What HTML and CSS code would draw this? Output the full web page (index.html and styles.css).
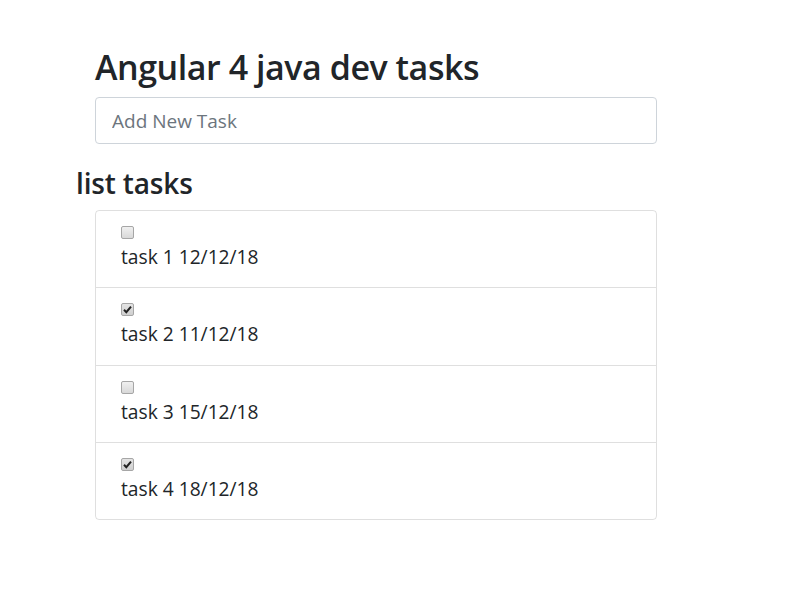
FILE: index.html
```html
<!DOCTYPE html>
<html>
<head>
<meta charset="utf-8">
<link rel="stylesheet" href="styles.css">
</head>
<body>
<div class="app">
  <h1 class="title">Angular 4 java dev tasks</h1>
  <input class="task-input" type="text" placeholder="Add New Task">
  <h2 class="subtitle">list tasks</h2>
  <ul class="task-list">
    <li class="task-item">
      <span class="check"></span>
      <div class="task-text">task 1 12/12/18</div>
    </li>
    <li class="task-item tall">
      <span class="check checked"><svg viewBox="0 0 13 13" width="13" height="13"><path d="M3 6.8 L5.3 9.2 L10 3.6" fill="none" stroke="#222" stroke-width="2"/></svg></span>
      <div class="task-text">task 2 11/12/18</div>
    </li>
    <li class="task-item">
      <span class="check"></span>
      <div class="task-text">task 3 15/12/18</div>
    </li>
    <li class="task-item">
      <span class="check checked"><svg viewBox="0 0 13 13" width="13" height="13"><path d="M3 6.8 L5.3 9.2 L10 3.6" fill="none" stroke="#222" stroke-width="2"/></svg></span>
      <div class="task-text">task 4 18/12/18</div>
    </li>
  </ul>
</div>
</body>
</html>
```
FILE: styles.css
```css
* { box-sizing: border-box; }
html, body { margin: 0; padding: 0; background: #fff; }
body {
  font-family: "Open Sans", "Noto Sans", sans-serif;
  color: #212529;
}
.app {
  padding-left: 95px;
  width: 657px;
}
.title {
  margin: 43px 0 6px 0;
  font-size: 34px;
  line-height: 48px;
  font-weight: 600;
  letter-spacing: -0.45px;
}
.task-input {
  display: block;
  width: 562px;
  height: 47px;
  margin: 0;
  padding: 0 16px;
  border: 1px solid #ced4da;
  border-radius: 4px;
  font-family: inherit;
  font-size: 19px;
  color: #495057;
  outline: none;
}
.task-input::placeholder { color: #6c757d; opacity: 1; }
.subtitle {
  margin: 20px 0 8px -19px;
  font-size: 28px;
  line-height: 38px;
  font-weight: 600;
  letter-spacing: -0.15px;
}
.task-list {
  list-style: none;
  margin: 0;
  padding: 0;
  width: 562px;
  border: 1px solid rgba(0,0,0,0.125);
  border-radius: 4px;
}
.task-item {
  padding: 12px 20px 15px 20px;
  border-top: 1px solid rgba(0,0,0,0.125);
  height: 77px;
}
.task-item:first-child { border-top: none; height: 76px; }
.task-item.tall { height: 78px; }
.check {
  display: block;
  width: 13px;
  height: 13px;
  margin: 3px 0 3px 5px;
  border: 1px solid #a6a6a6;
  border-radius: 2px;
  background: linear-gradient(#f0f0f0, #d8d8d8);
  position: relative;
}
.check.checked { background: linear-gradient(#e4e4e4, #cfcfcf); }
.check svg {
  position: absolute;
  left: -1px;
  top: -1px;
}
.task-text {
  margin-left: 5px;
  margin-top: 1px;
  font-size: 19.2px;
  line-height: 30px;
}
```
